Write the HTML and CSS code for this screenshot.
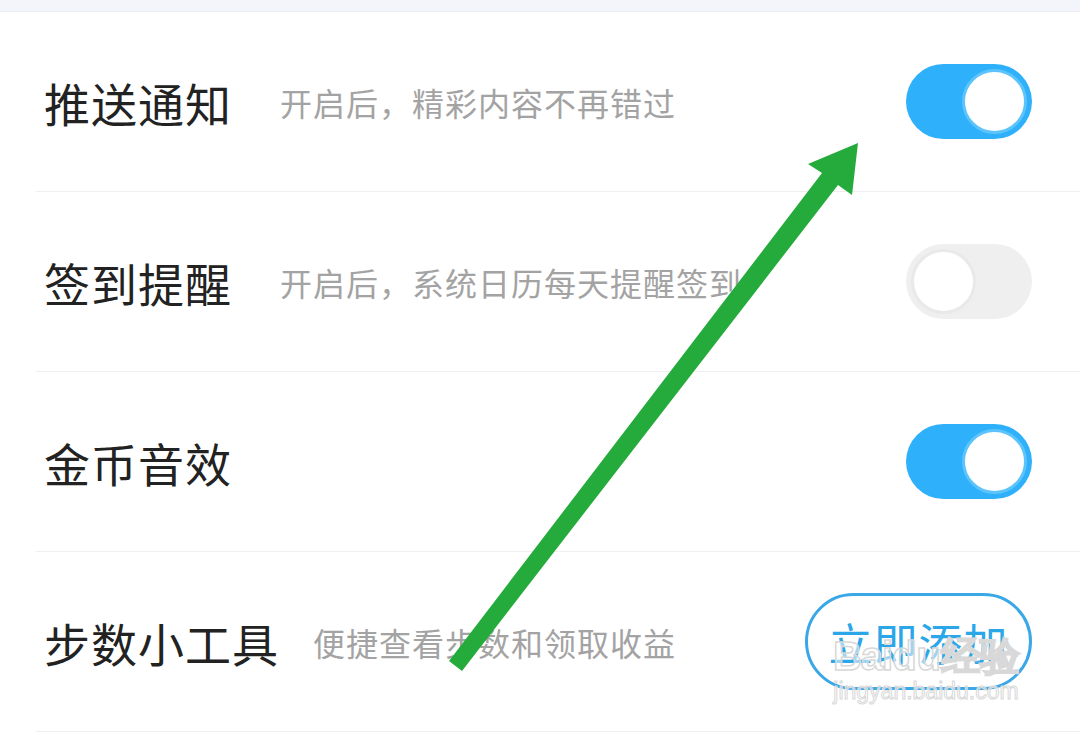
FILE: index.html
```html
<!DOCTYPE html>
<html lang="zh">
<head>
    <meta charset="UTF-8">
    <meta name="viewport" content="width=device-width, initial-scale=1.0">
    <title>设置 - 通知</title>
    <link rel="stylesheet" href="styles.css">
</head>
<body>
    <div class="top-bar"></div>
    <div class="settings-list">
        <div class="setting-row">
            <span class="setting-title">推送通知</span>
            <span class="setting-desc">开启后，精彩内容不再错过</span>
            <div class="switch on"><span class="knob"></span></div>
        </div>
        <div class="setting-row">
            <span class="setting-title">签到提醒</span>
            <span class="setting-desc">开启后，系统日历每天提醒签到</span>
            <div class="switch"><span class="knob"></span></div>
        </div>
        <div class="setting-row">
            <span class="setting-title">金币音效</span>
            <span class="setting-desc"></span>
            <div class="switch on"><span class="knob"></span></div>
        </div>
        <div class="setting-row">
            <span class="setting-title">步数小工具</span>
            <span class="setting-desc">便捷查看步数和领取收益</span>
            <button type="button" class="add-button">立即添加</button>
        </div>
    </div>

    <!-- 标注箭头 -->
    <svg class="arrow" width="1080" height="733" viewBox="0 0 1080 733">
        <polygon points="449,661 462,671 838,185 852,195 858,143 808,164 822,173" fill="#25ab3b"/>
    </svg>

    <div class="watermark">
        <div class="wm-logo">Bai<span class="wm-du">du</span>经验</div>
        <div class="wm-url">jingyan.baidu.com</div>
    </div>
</body>
</html>
```

FILE: styles.css
```css
body {
    margin: 0;
    width: 1080px;
    height: 733px;
    overflow: hidden;
    background-color: #ffffff;
    font-family: "Noto Sans CJK SC", "Noto Sans", sans-serif;
    position: relative;
}
.top-bar {
    height: 11px;
    background-color: #f4f5fa;
    border-bottom: 1px solid #eceef4;
}
.settings-list {
    padding-left: 36px;
}
.setting-row {
    height: 179px;
    border-bottom: 1px solid #efefef;
    display: flex;
    align-items: center;
    padding-left: 8px;
    padding-right: 48px;
}
.setting-title {
    font-size: 46px;
    color: #222222;
    min-width: 202px;
    margin-right: 34px;
    white-space: nowrap;
    letter-spacing: 1px;
}
.setting-desc {
    flex: 1;
    font-size: 32px;
    color: #a3a3a3;
    white-space: nowrap;
    letter-spacing: 1px;
}
.switch {
    width: 126px;
    height: 75px;
    border-radius: 38px;
    background-color: #efefef;
    display: flex;
    align-items: center;
    justify-content: flex-start;
    padding: 0 5px;
    box-sizing: border-box;
}
.switch.on {
    background-color: #2eb0fb;
    justify-content: flex-end;
}
.knob {
    width: 59px;
    height: 59px;
    border-radius: 50%;
    background-color: #ffffff;
    border: 3px solid #e9e9e9;
}
.switch.on .knob {
    border-color: #5cc3fb;
}
.add-button {
    width: 227px;
    height: 97px;
    border: 3px solid #3aa7e7;
    border-radius: 49px;
    background-color: #ffffff;
    color: #2ba6e8;
    font-family: "Noto Sans CJK SC", "Noto Sans", sans-serif;
    font-size: 44px;
    letter-spacing: 1px;
    padding: 0;
    cursor: pointer;
}
.arrow {
    position: absolute;
    left: 0;
    top: 0;
    pointer-events: none;
}
.watermark {
    position: absolute;
    left: 826px;
    top: 634px;
    width: 200px;
    text-align: center;
    color: rgba(255, 255, 255, 0.55);
    -webkit-text-stroke: 1.5px #d8d8d8;
    pointer-events: none;
}
.wm-logo {
    font-family: "Liberation Sans", Arial, sans-serif;
    font-size: 40px;
    font-weight: bold;
    line-height: 44px;
    letter-spacing: -1px;
}
.wm-du {
    letter-spacing: 0;
}
.wm-url {
    font-family: "Liberation Sans", Arial, sans-serif;
    font-size: 23px;
    line-height: 26px;
    -webkit-text-stroke: 1px #d8d8d8;
}
```
